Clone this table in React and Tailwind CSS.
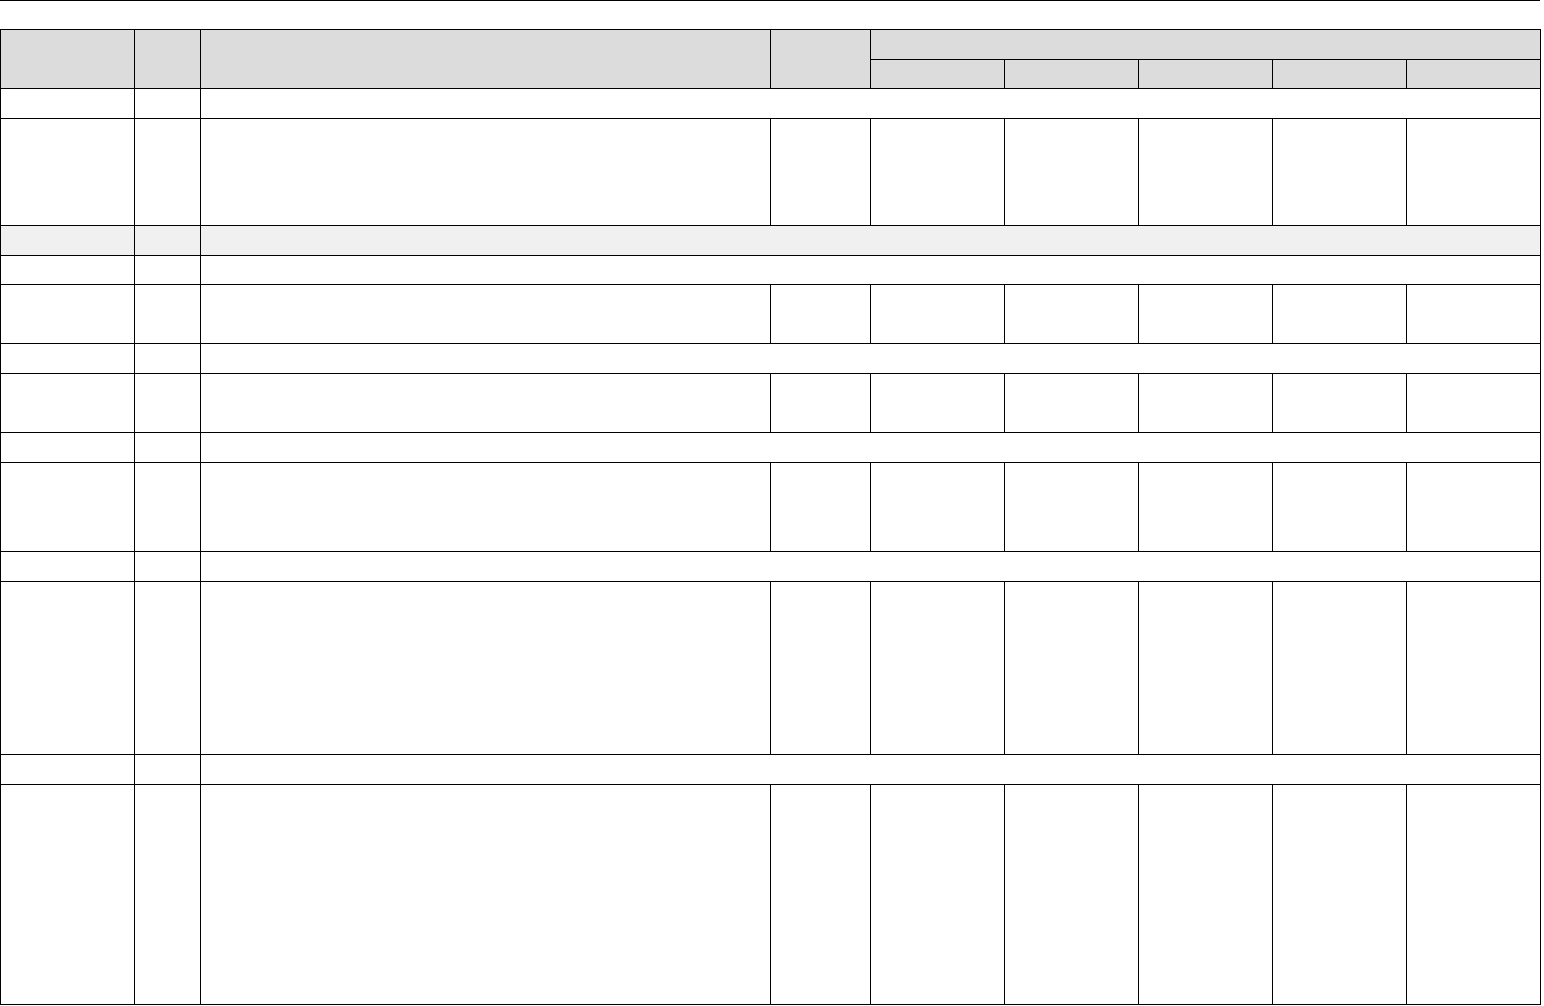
import React from "react";

const cols = [134, 66, 570, 100, 134, 134, 134, 134, 134];

const rows = [
  { type: "section", h: 30 },
  { type: "data", h: 107 },
  { type: "section", h: 30, gray: true },
  { type: "section", h: 29 },
  { type: "data", h: 59 },
  { type: "section", h: 30 },
  { type: "data", h: 59 },
  { type: "section", h: 30 },
  { type: "data", h: 89 },
  { type: "section", h: 30 },
  { type: "data", h: 173 },
  { type: "section", h: 30 },
  { type: "data", h: 220 },
];

export default function App() {
  return (
    <div className="bg-white w-[1544px] h-[1006px] overflow-hidden" style={{ fontFamily: '"Liberation Sans", Arial, sans-serif' }}>
      <div className="w-[1540px] h-px bg-black" />
      <div className="h-[28px]" />
      <table className="table-fixed border-collapse w-[1541px]">
        <colgroup>
          {cols.map((w, i) => (
            <col key={i} style={{ width: w }} />
          ))}
        </colgroup>
        <thead>
          <tr className="h-[30px] bg-[#dcdcdc]">
            <th rowSpan={2} className="border border-black p-0"></th>
            <th rowSpan={2} className="border border-black p-0"></th>
            <th rowSpan={2} className="border border-black p-0"></th>
            <th rowSpan={2} className="border border-black p-0"></th>
            <th colSpan={5} className="border border-black p-0"></th>
          </tr>
          <tr className="h-[29px] bg-[#dcdcdc]">
            <th className="border border-black p-0"></th>
            <th className="border border-black p-0"></th>
            <th className="border border-black p-0"></th>
            <th className="border border-black p-0"></th>
            <th className="border border-black p-0"></th>
          </tr>
        </thead>
        <tbody>
          {rows.map((r, i) =>
            r.type === "section" ? (
              <tr key={i} className={r.gray ? "bg-[#f0f0f0]" : "bg-white"} style={{ height: r.h }}>
                <td className="border border-black p-0"></td>
                <td className="border border-black p-0"></td>
                <td colSpan={7} className="border border-black p-0"></td>
              </tr>
            ) : (
              <tr key={i} className="bg-white" style={{ height: r.h }}>
                {cols.map((_, j) => (
                  <td key={j} className="border border-black p-0"></td>
                ))}
              </tr>
            )
          )}
        </tbody>
      </table>
    </div>
  );
}
